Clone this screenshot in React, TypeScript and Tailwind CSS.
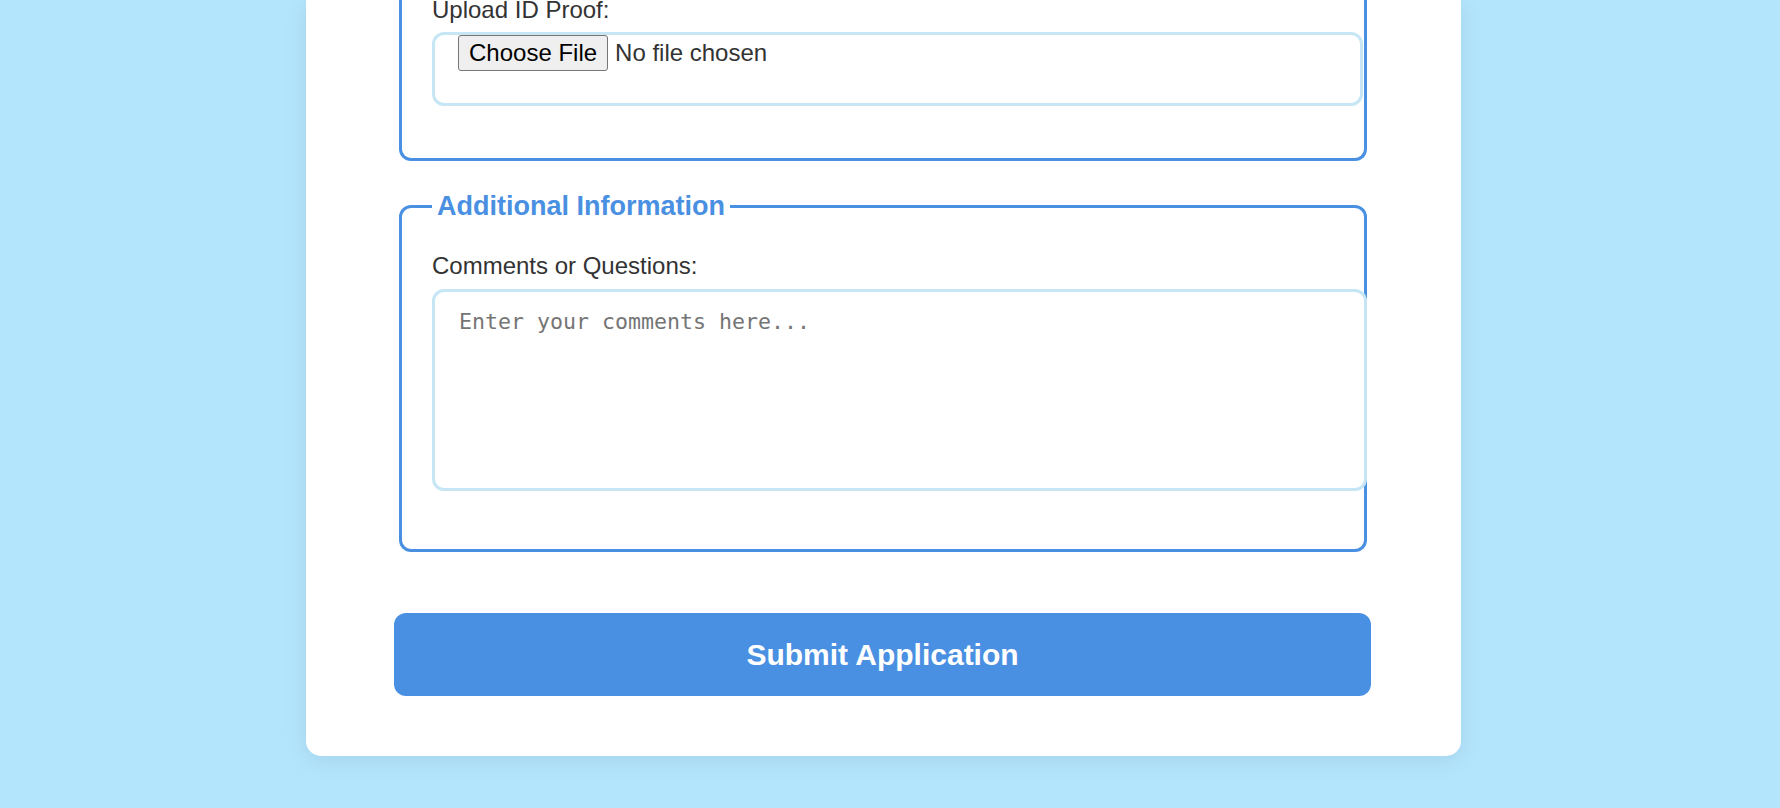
export default function App() {
  return (
    <div className="min-h-screen bg-[#b3e5fc] pb-[52px] pr-[13px] flex justify-center font-['Liberation_Sans',Arial,sans-serif] text-[#333]">
      <div className="w-[1155px] bg-white rounded-b-[15px] shadow-[0_4px_24px_rgba(0,0,0,0.08)] pl-[88px] pr-[90px] pb-[60px]">
        {/* ID proof section (top is scrolled out of view) */}
        <div className="ml-[5px] w-[968px] border-x-[3px] border-b-[3px] border-[#4a90e2] rounded-b-[12px] px-[30px] pb-[52px]">
          <label className="block text-[24px] leading-[20px] mb-[12px]">Upload ID Proof:</label>
          <input
            type="file"
            className="block w-[931px] h-[74px] border-[3px] border-[#c6e6f6] rounded-[12px] pl-[23px] text-[24px] leading-[28px] text-[#333] file:h-[36px] file:px-[10px] file:mr-[7px] file:bg-[#efefef] file:border file:border-[#767676] file:rounded-[3px] file:text-black"
          />
        </div>

        {/* Additional information */}
        <fieldset className="mt-[30px] ml-[5px] w-[968px] min-w-0 border-[3px] border-[#4a90e2] rounded-[12px] px-[30px] pt-[30px] pb-[58px]">
          <legend className="px-[5px] text-[27px] leading-[31px] font-bold text-[#4a90e2]">Additional Information</legend>
          <label className="block text-[24px] leading-[28px] mb-[9px]">Comments or Questions:</label>
          <textarea
            placeholder="Enter your comments here..."
            className="block w-[935px] h-[202px] border-[3px] border-[#c6e6f6] rounded-[12px] pl-[24px] pt-[17px] resize-none font-['DejaVu_Sans_Mono',monospace] text-[21.6px] leading-[26px] placeholder:text-[#757575] bg-white"
          />
        </fieldset>

        <button className="mt-[61px] w-[977px] h-[83px] rounded-[12px] bg-[#4a90e2] text-white font-bold text-[30px] leading-[34px]">
          Submit Application
        </button>
      </div>
    </div>
  );
}
